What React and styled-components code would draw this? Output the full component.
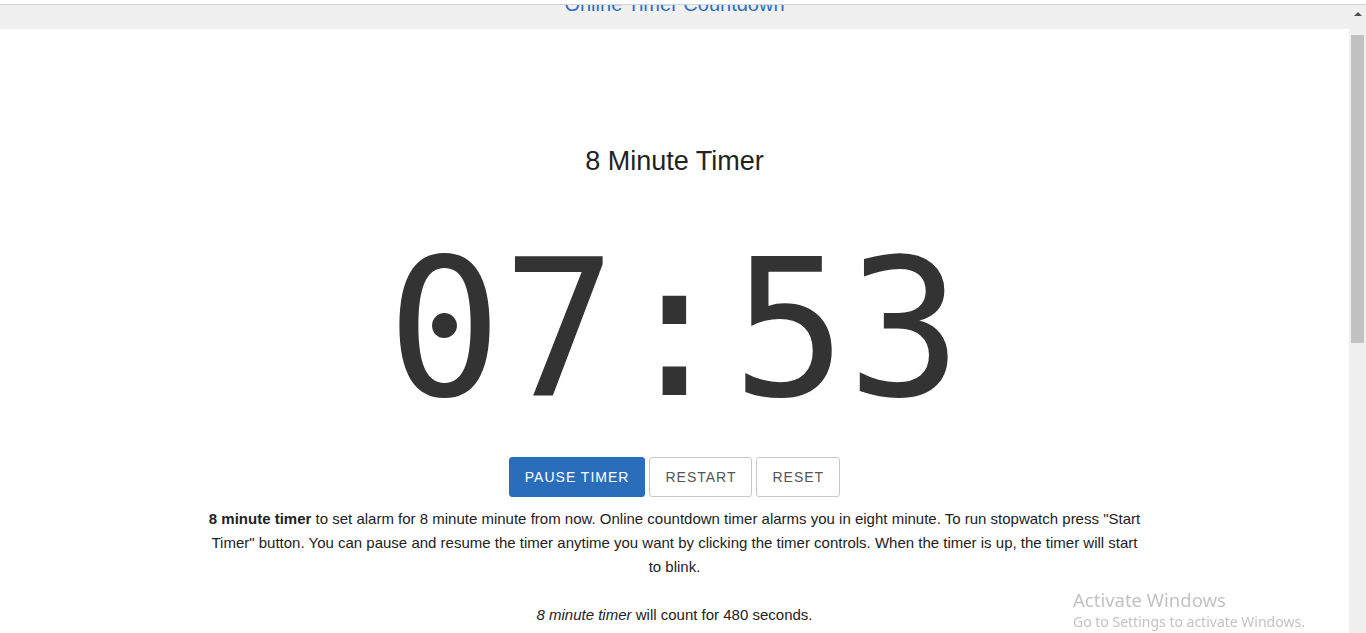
import React from "react";
import styled, { createGlobalStyle } from "styled-components";

const GlobalStyle = createGlobalStyle`
  html, body { margin: 0; padding: 0; overflow: hidden; background: #fff; }
  body { font-family: "Liberation Sans", Arial, sans-serif; }
`;

const Frame = styled.div`
  height: 633px;
  display: flex;
  flex-direction: column;
`;

const TopEdge = styled.div`
  height: 4px;
  background: #fff;
  border-bottom: 1px solid #d2d4d8;
  flex: none;
`;

const Body = styled.div`
  flex: 1;
  display: flex;
  min-height: 0;
`;

const Page = styled.div`
  flex: 1;
  display: flex;
  flex-direction: column;
  overflow: hidden;
`;

const Header = styled.header`
  height: 24px;
  flex: none;
  background: #f0f0f0;
  overflow: hidden;
  text-align: center;
`;

const SiteTitle = styled.a`
  display: block;
  margin-top: -11px;
  font-size: 20px;
  line-height: 20px;
  color: #2f6fc4;
  text-decoration: none;
`;

const Main = styled.main`
  flex: 1;
  background: #fff;
  text-align: center;
  padding-top: 116px;
`;

const Heading = styled.h1`
  margin: 0;
  font-size: 27px;
  line-height: 32px;
  font-weight: 400;
  color: #222;
`;

const Clock = styled.div`
  margin-top: 57px;
  font-family: "DejaVu Sans Mono", monospace;
  font-size: 191px;
  line-height: 1;
  color: #333;
`;

const Controls = styled.div`
  margin-top: 32px;
  display: flex;
  justify-content: center;
  gap: 4px;
`;

const Button = styled.button`
  height: 40px;
  padding: 0 15px;
  border-radius: 3px;
  font-family: "Liberation Sans", Arial, sans-serif;
  font-size: 14px;
  letter-spacing: 1px;
  text-transform: uppercase;
  cursor: pointer;
  border: 1px solid ${(p) => (p.$primary ? "#2a6ebb" : "#c8c8c8")};
  background: ${(p) => (p.$primary ? "#2a6ebb" : "#fff")};
  color: ${(p) => (p.$primary ? "#fff" : "#555")};
`;

const Text = styled.div`
  width: 936px;
  margin: 10px auto 0;
  font-size: 15px;
  line-height: 24px;
  color: #222;
`;

const Para = styled.p`
  margin: 0 0 24px;
`;

const ScrollBar = styled.div`
  width: 17px;
  flex: none;
  background: #f0f0f0;
  display: flex;
  flex-direction: column;
  align-items: center;
`;

const Arrow = styled.div`
  margin-top: 7px;
  width: 0;
  height: 0;
  border-left: 4px solid transparent;
  border-right: 4px solid transparent;
  border-bottom: 4px solid #505050;
`;

const Thumb = styled.div`
  margin-top: 19px;
  width: 13px;
  height: 308px;
  background: #c1c1c1;
`;

const Watermark = styled.div`
  position: fixed;
  left: 1073px;
  top: 588px;
  font-family: "Noto Sans", "Open Sans", sans-serif;
  color: #c2c2c2;
  pointer-events: none;
`;

const WmTitle = styled.div`
  font-size: 18.5px;
  line-height: 24px;
`;

const WmSub = styled.div`
  font-size: 14px;
  line-height: 20px;
`;

export default function App() {
  return (
    <>
      <GlobalStyle />
      <Frame>
        <TopEdge />
        <Body>
          <Page>
            <Header>
              <SiteTitle href="#">Online Timer Countdown</SiteTitle>
            </Header>
            <Main>
              <Heading>8 Minute Timer</Heading>
              <Clock>07:53</Clock>
              <Controls>
                <Button $primary>Pause Timer</Button>
                <Button>Restart</Button>
                <Button>Reset</Button>
              </Controls>
              <Text>
                <Para>
                  <b>8 minute timer</b> to set alarm for 8 minute minute from now. Online countdown timer alarms
                  you in eight minute. To run stopwatch press "Start Timer" button. You can pause and resume the
                  timer anytime you want by clicking the timer controls. When the timer is up, the timer will start
                  to blink.
                </Para>
                <Para>
                  <i>8 minute timer</i> will count for 480 seconds.
                </Para>
              </Text>
            </Main>
          </Page>
          <ScrollBar>
            <Arrow />
            <Thumb />
          </ScrollBar>
        </Body>
      </Frame>
      <Watermark>
        <WmTitle>Activate Windows</WmTitle>
        <WmSub>Go to Settings to activate Windows.</WmSub>
      </Watermark>
    </>
  );
}
